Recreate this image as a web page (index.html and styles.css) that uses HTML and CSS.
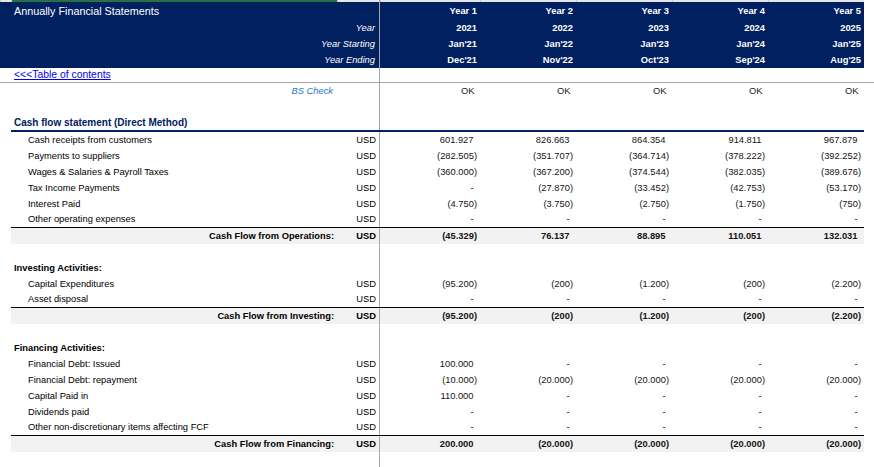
FILE: index.html
```html
<!DOCTYPE html>
<html>
<head>
<meta charset="utf-8">
<link rel="stylesheet" href="styles.css">
</head>
<body>
<div class="sheet">
  <div class="row strip">
    <div class="gc"></div><div class="gc sel"></div><div class="gc"></div><div class="vl"></div>
    <div class="gc"></div><div class="gc"></div><div class="gc"></div><div class="gc"></div><div class="gc"></div>
  </div>

  <div class="row hd title">
    <div></div><div class="span2 ttl">Annually Financial Statements</div><div class="vl"></div>
    <div class="v">Year 1</div><div class="v">Year 2</div><div class="v">Year 3</div><div class="v">Year 4</div><div class="v">Year 5</div>
  </div>
  <div class="row hd">
    <div></div><div class="span2 hl">Year</div><div class="vl"></div>
    <div class="v">2021</div><div class="v">2022</div><div class="v">2023</div><div class="v">2024</div><div class="v">2025</div>
  </div>
  <div class="row hd">
    <div></div><div class="span2 hl">Year Starting</div><div class="vl"></div>
    <div class="v">Jan'21</div><div class="v">Jan'22</div><div class="v">Jan'23</div><div class="v">Jan'24</div><div class="v">Jan'25</div>
  </div>
  <div class="row hd">
    <div></div><div class="span2 hl">Year Ending</div><div class="vl"></div>
    <div class="v">Dec'21</div><div class="v">Nov'22</div><div class="v">Oct'23</div><div class="v">Sep'24</div><div class="v">Aug'25</div>
  </div>

  <div class="row toc">
    <div></div><div class="span2 lab"><a class="link" href="#">&lt;&lt;&lt;Table of contents</a></div><div class="vl"></div>
    <div></div><div></div><div></div><div></div><div></div>
  </div>
  <div class="hline"></div>
  <div class="row chk">
    <div></div><div class="bs">BS Check</div><div></div><div class="vl"></div>
    <div class="v ok">OK</div><div class="v ok">OK</div><div class="v ok">OK</div><div class="v ok">OK</div><div class="v ok">OK</div>
  </div>
  <div class="row"><div></div><div></div><div></div><div class="vl"></div><div></div><div></div><div></div><div></div><div></div></div>

  <div class="row sec">
    <div></div><div class="lab head">Cash flow statement (Direct Method)</div><div></div><div class="vl"></div>
    <div></div><div></div><div></div><div></div><div></div>
  </div>
  <div class="row">
    <div></div><div class="lab ind">Cash receipts from customers</div><div class="unit">USD</div><div class="vl"></div>
    <div class="v pos">601.927</div><div class="v pos">826.663</div><div class="v pos">864.354</div><div class="v pos">914.811</div><div class="v pos">967.879</div>
  </div>
  <div class="row">
    <div></div><div class="lab ind">Payments to suppliers</div><div class="unit">USD</div><div class="vl"></div>
    <div class="v">(282.505)</div><div class="v">(351.707)</div><div class="v">(364.714)</div><div class="v">(378.222)</div><div class="v">(392.252)</div>
  </div>
  <div class="row">
    <div></div><div class="lab ind">Wages &amp; Salaries &amp; Payroll Taxes</div><div class="unit">USD</div><div class="vl"></div>
    <div class="v">(360.000)</div><div class="v">(367.200)</div><div class="v">(374.544)</div><div class="v">(382.035)</div><div class="v">(389.676)</div>
  </div>
  <div class="row">
    <div></div><div class="lab ind">Tax Income Payments</div><div class="unit">USD</div><div class="vl"></div>
    <div class="v pos">-</div><div class="v">(27.870)</div><div class="v">(33.452)</div><div class="v">(42.753)</div><div class="v">(53.170)</div>
  </div>
  <div class="row">
    <div></div><div class="lab ind">Interest Paid</div><div class="unit">USD</div><div class="vl"></div>
    <div class="v">(4.750)</div><div class="v">(3.750)</div><div class="v">(2.750)</div><div class="v">(1.750)</div><div class="v">(750)</div>
  </div>
  <div class="row last">
    <div></div><div class="lab ind">Other operating expenses</div><div class="unit">USD</div><div class="vl"></div>
    <div class="v pos">-</div><div class="v pos">-</div><div class="v pos">-</div><div class="v pos">-</div><div class="v pos">-</div>
  </div>
  <div class="row tot">
    <div></div><div class="lab sum">Cash Flow from Operations:</div><div class="unit">USD</div><div class="vl"></div>
    <div class="v">(45.329)</div><div class="v pos">76.137</div><div class="v pos">88.895</div><div class="v pos">110.051</div><div class="v pos">132.031</div>
  </div>
  <div class="row"><div></div><div></div><div></div><div class="vl"></div><div></div><div></div><div></div><div></div><div></div></div>

  <div class="row">
    <div></div><div class="lab grp">Investing Activities:</div><div></div><div class="vl"></div>
    <div></div><div></div><div></div><div></div><div></div>
  </div>
  <div class="row">
    <div></div><div class="lab ind">Capital Expenditures</div><div class="unit">USD</div><div class="vl"></div>
    <div class="v">(95.200)</div><div class="v">(200)</div><div class="v">(1.200)</div><div class="v">(200)</div><div class="v">(2.200)</div>
  </div>
  <div class="row last">
    <div></div><div class="lab ind">Asset disposal</div><div class="unit">USD</div><div class="vl"></div>
    <div class="v pos">-</div><div class="v pos">-</div><div class="v pos">-</div><div class="v pos">-</div><div class="v pos">-</div>
  </div>
  <div class="row tot">
    <div></div><div class="lab sum">Cash Flow from Investing:</div><div class="unit">USD</div><div class="vl"></div>
    <div class="v">(95.200)</div><div class="v">(200)</div><div class="v">(1.200)</div><div class="v">(200)</div><div class="v">(2.200)</div>
  </div>
  <div class="row"><div></div><div></div><div></div><div class="vl"></div><div></div><div></div><div></div><div></div><div></div></div>

  <div class="row">
    <div></div><div class="lab grp">Financing Activities:</div><div></div><div class="vl"></div>
    <div></div><div></div><div></div><div></div><div></div>
  </div>
  <div class="row">
    <div></div><div class="lab ind">Financial Debt: Issued</div><div class="unit">USD</div><div class="vl"></div>
    <div class="v pos">100.000</div><div class="v pos">-</div><div class="v pos">-</div><div class="v pos">-</div><div class="v pos">-</div>
  </div>
  <div class="row">
    <div></div><div class="lab ind">Financial Debt: repayment</div><div class="unit">USD</div><div class="vl"></div>
    <div class="v">(10.000)</div><div class="v">(20.000)</div><div class="v">(20.000)</div><div class="v">(20.000)</div><div class="v">(20.000)</div>
  </div>
  <div class="row">
    <div></div><div class="lab ind">Capital Paid in</div><div class="unit">USD</div><div class="vl"></div>
    <div class="v pos">110.000</div><div class="v pos">-</div><div class="v pos">-</div><div class="v pos">-</div><div class="v pos">-</div>
  </div>
  <div class="row">
    <div></div><div class="lab ind">Dividends paid</div><div class="unit">USD</div><div class="vl"></div>
    <div class="v pos">-</div><div class="v pos">-</div><div class="v pos">-</div><div class="v pos">-</div><div class="v pos">-</div>
  </div>
  <div class="row last">
    <div></div><div class="lab ind">Other non-discretionary items affecting FCF</div><div class="unit">USD</div><div class="vl"></div>
    <div class="v pos">-</div><div class="v pos">-</div><div class="v pos">-</div><div class="v pos">-</div><div class="v pos">-</div>
  </div>
  <div class="row tot">
    <div></div><div class="lab sum">Cash Flow from Financing:</div><div class="unit">USD</div><div class="vl"></div>
    <div class="v pos">200.000</div><div class="v">(20.000)</div><div class="v">(20.000)</div><div class="v">(20.000)</div><div class="v">(20.000)</div>
  </div>
  <div class="row fill"><div></div><div></div><div></div><div class="vl"></div><div></div><div></div><div></div><div></div><div></div></div>
</div>
</body>
</html>
```

FILE: styles.css
```css
* {
  box-sizing: border-box;
  margin: 0;
  padding: 0;
}

html, body {
  margin: 0;
  background: #ffffff;
  overflow: hidden;
}

body {
  font-family: "Liberation Sans", Arial, sans-serif;
  font-size: 9.33px;
  color: #000000;
}

.sheet {
  width: 874px;
  height: 467px;
  display: flex;
  flex-direction: column;
}

.row {
  display: grid;
  grid-template-columns: 11px 326px 42px 1px 100px 96px 96px 96px 96px;
  width: 864px;
  height: 16px;
  line-height: 16px;
  white-space: nowrap;
  flex: none;
}

.row > div {
  min-width: 0;
}

.span2 {
  grid-column: span 2;
}

/* top grid strip */
.strip {
  height: 2px;
  line-height: 2px;
}
.gc {
  background: #e6e6e6;
  border-left: 1px solid #c6c6c6;
}
.sel {
  background: #217346;
}

/* cells */
.lab {
  padding-left: 3px;
}
.ind {
  padding-left: 17px;
}
.grp {
  font-weight: bold;
}
.head {
  font-weight: bold;
  font-size: 10px;
  color: #002060;
}
.sum {
  font-weight: bold;
  text-align: right;
  padding-right: 3px;
}
.unit {
  text-align: right;
  padding-right: 3px;
}
.v {
  text-align: right;
  padding-right: 3px;
  color: #141414;
}
.v.pos {
  padding-right: 6.5px;
}

/* header band */
.hd {
  background: #002060;
  color: #ffffff;
}
.title {
  height: 18px;
  line-height: 19px;
}
.ttl {
  font-size: 10.8px;
  line-height: 18px;
  padding-left: 3px;
}
.hd .v {
  font-weight: bold;
  color: #ffffff;
}
.hl {
  text-align: right;
  font-style: italic;
  padding-right: 4px;
}

/* table of contents link */
.toc {
  height: 14px;
  line-height: 14px;
}
.link {
  color: #0000ee;
  text-decoration: underline;
  font-size: 10.4px;
}

.hline {
  width: 874px;
  height: 1px;
  background: #a6a6a6;
  flex: none;
}

/* BS check row */
.chk {
  height: 17px;
  line-height: 17px;
}
.bs {
  text-align: right;
  font-style: italic;
  color: #2f75c8;
  padding-right: 4px;
}
.v.ok {
  padding-right: 5.5px;
  color: #1a1a1a;
}

/* section header */
.sec > div:not(:first-child) {
  border-bottom: 2px solid #002060;
}
.sec {
  line-height: 14px;
}

/* last item before total */
.last > div:not(:first-child) {
  border-bottom: 1px solid #000000;
}
.last {
  line-height: 15px;
}

/* totals */
.tot > div:not(:first-child) {
  background: #f2f2f2;
}
.tot {
  font-weight: bold;
}

.fill {
  flex: 1 1 auto;
  height: auto;
}

/* frozen pane line */
.row > div.vl {
  background: #a6a6a6;
}
```
